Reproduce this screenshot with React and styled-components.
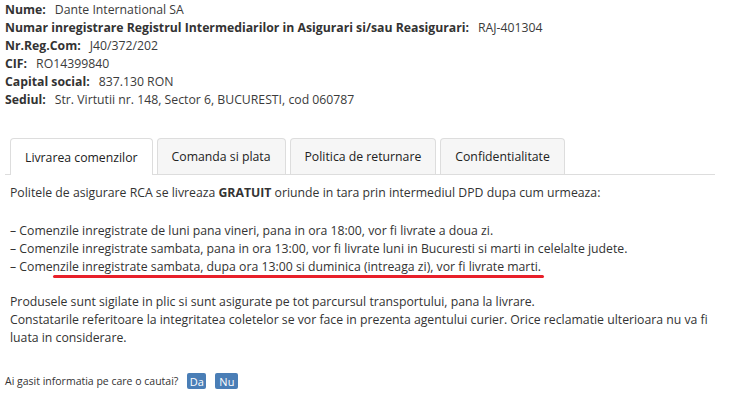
import React from "react";
import styled, { createGlobalStyle } from "styled-components";

const Global = createGlobalStyle`
  html, body { margin: 0; padding: 0; background: #fff; }
  body { font-family: "Open Sans", "Noto Sans", sans-serif; color: #333; font-size: 12.25px; }
`;

const Page = styled.div`
  padding: 1px 5px 0 5px;
  width: 710px;
`;

const Info = styled.div`
  line-height: 18px;
`;

const InfoRow = styled.div`
  white-space: nowrap;
`;

const Label = styled.b`
  font-weight: 700;
  color: #333;
  margin-right: 9px;
`;

const Value = styled.span`
  color: #3b3b3b;
`;

const Tabs = styled.div`
  margin-top: 29px;
  display: flex;
  gap: 4px;
  padding-left: 5px;
  border-bottom: 1px solid #ddd;
`;

const Tab = styled.div`
  box-sizing: border-box;
  padding: 0 ${(p) => p.$px}px;
  display: flex;
  align-items: center;
  border: 1px solid #ddd;
  border-bottom: none;
  border-radius: 4px 4px 0 0;
  background: ${(p) => (p.$active ? "#fff" : "#f6f6f6")};
  margin-bottom: ${(p) => (p.$active ? "-1px" : "0")};
  height: ${(p) => (p.$active ? "37px" : "36px")};
  color: #222;
  white-space: nowrap;
`;

const Pane = styled.div`
  padding: 9px 5px 0 5px;
  line-height: 18px;
`;

const Para = styled.p`
  margin: 0 0 ${(p) => p.$mb || 0}px 0;
`;

const Marked = styled.span`
  position: relative;
`;

const RedMark = styled.span`
  position: absolute;
  left: 43px;
  right: -3px;
  top: 17px;
  height: 3px;
  border-radius: 2px;
  background: #e8202a;
`;

const Feedback = styled.div`
  margin-top: 26px;
  display: flex;
  align-items: center;
  font-size: 10.5px;
  color: #333;
`;

const Btn = styled.span`
  display: inline-flex;
  align-items: center;
  justify-content: center;
  height: 16px;
  width: ${(p) => p.$w}px;
  border-radius: 2px;
  background: #4a7eb6;
  color: #fff;
  font-size: 11px;
  margin-left: ${(p) => p.$ml}px;
`;

export default function App() {
  return (
    <>
      <Global />
      <Page>
        <Info>
          <InfoRow><Label>Nume:</Label><Value>Dante International SA</Value></InfoRow>
          <InfoRow><Label>Numar inregistrare Registrul Intermediarilor in Asigurari si/sau Reasigurari:</Label><Value>RAJ-401304</Value></InfoRow>
          <InfoRow><Label>Nr.Reg.Com:</Label><Value>J40/372/202</Value></InfoRow>
          <InfoRow><Label>CIF:</Label><Value>RO14399840</Value></InfoRow>
          <InfoRow><Label>Capital social:</Label><Value>837.130 RON</Value></InfoRow>
          <InfoRow><Label>Sediul:</Label><Value>Str. Virtutii nr. 148, Sector 6, BUCURESTI, cod 060787</Value></InfoRow>
        </Info>
        <Tabs>
          <Tab $active $px={14}>Livrarea comenzilor</Tab>
          <Tab $px={14}>Comanda si plata</Tab>
          <Tab $px={14}>Politica de returnare</Tab>
          <Tab $px={14}>Confidentialitate</Tab>
        </Tabs>
        <Pane>
          <Para $mb={20}>
            Politele de asigurare RCA se livreaza <b>GRATUIT</b> oriunde in tara prin intermediul DPD dupa cum urmeaza:
          </Para>
          <Para $mb={17}>
            – Comenzile inregistrate de luni pana vineri, pana in ora 18:00, vor fi livrate a doua zi.<br />
            – Comenzile inregistrate sambata, pana in ora 13:00, vor fi livrate luni in Bucuresti si marti in celelalte judete.<br />
            <Marked>– Comenzile inregistrate sambata, dupa ora 13:00 si duminica (intreaga zi), vor fi livrate marti.<RedMark /></Marked>
          </Para>
          <Para>
            Produsele sunt sigilate in plic si sunt asigurate pe tot parcursul transportului, pana la livrare.<br />
            Constatarile referitoare la integritatea coletelor se vor face in prezenta agentului curier. Orice reclamatie ulterioara nu va fi luata in considerare.
          </Para>
        </Pane>
        <Feedback>
          Ai gasit informatia pe care o cautai?
          <Btn $w={19} $ml={9}>Da</Btn>
          <Btn $w={23} $ml={9}>Nu</Btn>
        </Feedback>
      </Page>
    </>
  );
}
